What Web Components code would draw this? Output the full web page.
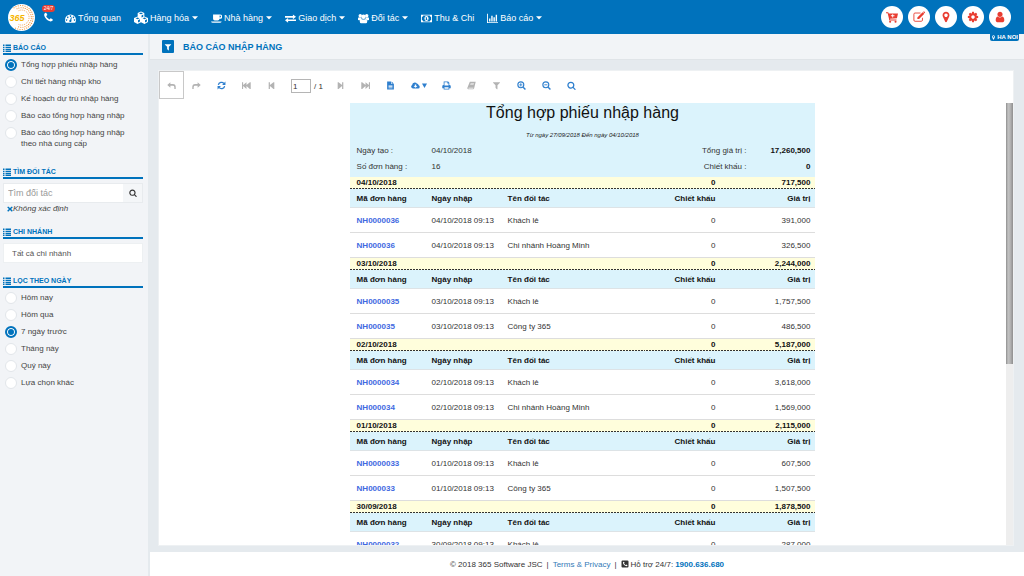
<!DOCTYPE html>
<html lang="vi">
<head>
<meta charset="utf-8">
<meta name="viewport" content="width=device-width, initial-scale=1">
<title>Báo cáo nhập hàng</title>
<style>
html, body { margin: 0; height: 100%; }
body {
  --brand: #0072bc; --panel: #f2f4f7; --line: #e5eaee; --danger: #e93d31; --text: #444;
  font-family: "Liberation Sans", Arial, sans-serif; font-size: 8px; color: var(--text);
}
</style>
</head>
<body>
<report-app></report-app>

<script>
const FA = '0 0 1792 1792';
const S = '0 0 16 16';
const ICONS = {
  list: [S, '<path d="M0 1h3v3H0zM5 1h11v3H5zM0 5.300h3v2.700H0zM5 5.300h11v2.700H5zM0 9.300h3V12H0zM5 9.300h11V12H5zM0 13.200h3V16H0zM5 13.200h11V16H5z"/>'],
  filter: [FA, '<path d="M1595 295q17 41-14 70l-493 493v742q0 42-39 59-13 5-25 5-27 0-45-19l-256-256q-19-19-19-45v-486l-493-493q-31-29-14-70 17-39 59-39h1280q42 0 59 39z"/>'],
  phone: [FA, '<path d="M1600 1240q0 27-10 70.5t-21 68.500q-21 50-122 106-94 51-186 51-27 0-53-3.500t-57.500-12.500-47-14.500-55.500-20.500-49-18q-98-35-175-83-127-79-264-216t-216-264q-48-77-83-175-3-9-18-49t-20.500-55.500-14.500-47-12.500-57.500-3.500-53q0-92 51-186 56-101 106-122 25-11 68.500-21t70.500-10q14 0 21 3 18 6 53 76 11 19 30 54t35 63.500 31 53.500q3 4 17.500 25t21.500 35.500 7 28.500q0 20-28.500 50t-62 55-62 53-28.500 46q0 9 5 22.500t8.500 20.500 14 24 11.500 19q76 137 174 235t235 174q2 1 19 11.500t24 14 20.500 8.500 22.500 5q18 0 46-28.500t53-62 55-62 50-28.500q14 0 28.500 7t35.500 21.500 25 17.500q25 15 53.500 31t63.500 35 54 30q70 35 76 53 3 7 3 21z"/>'],
  phoneBox: [S, '<path fill-rule="evenodd" d="M3 1h10q2 0 2 2v10q0 2-2 2H3q-2 0-2-2V3q0-2 2-2zM4 4.500C3.500 8 7.500 12.500 11.500 12.300Q13 11.600 12.900 10.300L10.700 9.100 9.500 10.300Q7 9 6 6.700L7.100 5.600 6 3.300Q4.500 3.200 4 4.500z"/>'],
  search: [FA, '<path d="M1216 832q0-185-131.5-316.5t-316.5-131.5-316.5 131.5-131.5 316.5 131.5 316.5 316.5 131.5 316.5-131.5 131.5-316.5zm512 832q0 52-38 90t-90 38q-54 0-90-38l-343-342q-179 124-399 124-143 0-273.5-55.5t-225-150-150-225-55.5-273.5 55.5-273.5 150-225 225-150 273.5-55.5 273.5 55.5 225 150 150 225 55.5 273.5q0 220-124 399l343 343q37 37 37 90z"/>'],
  pin: [FA, '<path d="M1152 640q0-106-75-181t-181-75-181 75-75 181 75 181 181 75 181-75 75-181zm256 0q0 109-33 179l-364 774q-16 33-47.5 52t-67.500 19-67.500-19-46.500-52l-365-774q-33-70-33-179 0-212 150-362t362-150 362 150 150 362z"/>'],
  user: [FA, '<path d="M1536 1399q0 109-62.5 187t-150.500 78h-854q-88 0-150.500-78t-62.500-187q0-85 8.500-160.500t31.500-152 58.500-131 94-89 134.500-34.500q131 128 313 128t313-128q76 0 134.500 34.500t94 89 58.500 131 31.500 152 8.500 160.500zm-256-887q0 159-112.500 271.500t-271.500 112.500-271.500-112.500-112.500-271.500 112.500-271.500 271.500-112.500 271.500 112.500 112.500 271.500z"/>'],
  cog: [FA, '<path d="M1152 896q0-106-75-181t-181-75-181 75-75 181 75 181 181 75 181-75 75-181zm512-109v222q0 12-8 23t-20 13l-185 28q-19 54-39 91 35 50 107 138 10 12 10 25t-9 23q-27 37-99 108t-94 71q-12 0-26-9l-138-108q-44 23-91 38-16 136-29 186-7 28-36 28h-222q-14 0-24.500-8.500t-11.500-21.500l-28-184q-49-16-90-37l-141 107q-10 9-25 9-14 0-25-11-126-114-165-168-7-10-7-23 0-12 8-23 15-21 51-66.500t54-70.500q-27-50-41-99l-183-27q-13-2-21-12.500t-8-23.500v-222q0-12 8-23t19-13l186-28q14-46 39-92-40-57-107-138-10-12-10-24 0-10 9-23 26-36 98.500-107.500t94.500-71.500q13 0 26 10l138 107q44-23 91-38 16-136 29-186 7-28 36-28h222q14 0 24.500 8.500t11.500 21.500l28 184q49 16 90 37l142-107q9-9 24-9 13 0 25 10 129 119 165 170 7 8 7 22 0 12-8 23-15 21-51 66.500t-54 70.500q26 50 41 98l183 28q13 2 21 12.500t8 23.500z"/>'],
  gauge: [S, '<path fill-rule="evenodd" d="M8 2a8 8 0 0 1 8 8q0 2.300-1.200 4H1.200Q0 12.300 0 10a8 8 0 0 1 8-8zM2.300 9a1.100 1.100 0 1 0 .01 0zM4 5.200a1.100 1.100 0 1 0 .01 0zM8 3.300a1.100 1.100 0 1 0 .01 0zM12.300 5.200a1.100 1.100 0 1 0 .01 0zM13.800 9a1.100 1.100 0 1 0 .01 0zM8.700 6.200L7.600 9.800Q6 10.300 6.200 12 7 13.600 8.600 13.100 10.200 12 9.200 10.300L10 6.600z"/>'],
  cubes: [S, '<path fill-rule="evenodd" d="M8 .5l3.800 1.700v4L16 8v4.700L12 14.800 8 12.800 4 14.800 0 12.700V8l4.200-1.800v-4zM8 1.700L5.700 2.800 8 3.800l2.300-1zM8.600 5v2.500l2-1V4zM4 7.300L1.800 8.300 4 9.400l2.300-1.100zM12 7.300L9.800 8.300 12 9.400l2.300-1.100zM4.600 10.500v2.700l2.200-1.200V9.400zM12.600 10.500v2.700l2.200-1.200V9.400z"/>'],
  cup: [S, '<path fill-rule="evenodd" d="M3 2h10a3.200 3.200 0 0 1 0 6.500h-.6Q12 11 10 11H5.500Q3 11 3 8.500zM12.500 3.700v3H13a1.500 1.500 0 0 0 0-3zM0 12.200h15.500Q15 14.200 13 14.200H2.500Q.5 14.200 0 12.200z"/>'],
  exchange: [S, '<path d="M0 4.300h11.500V2L16 5.500 11.500 9V6.900H0zM16 11.800H4.500v2.500L0 10.600 4.500 7.200v2.100H16z"/>'],
  group: [S, '<circle cx="3.300" cy="4" r="2.500"/><circle cx="12.700" cy="4" r="2.500"/><circle cx="8" cy="5.500" r="3.300"/><path d="M0 10V7.500Q.3 6 1.700 6q1.800.8 2.700.3Q4.500 8 5.500 8.800 3.500 9 3 10.800zM16 10V7.500Q15.700 6 14.300 6q-1.800.8-2.700.3Q11.500 8 10.500 8.800 12.500 9 13 10.800zM5 8.600Q8 10.500 11 8.600q2.300.4 2.500 4.200Q13 15 11.500 15h-7Q3 15 2.500 12.800 2.700 9 5 8.600z"/>'],
  money: [S, '<path fill-rule="evenodd" d="M0 2.500h16v11H0zM3.300 3.800Q3 5.500 1.300 5.800v4.400Q3 10.500 3.300 12.200h9.400q.3-1.700 2-2V5.800q-1.700-.3-2-2zM8 4.300a3 3.700 0 1 1-.01 0zM7.500 6.200l-1 .8v.5h.8V9.300h-.8v.8h3v-.8h-.8V6.200z"/>'],
  chart: [S, '<path d="M0 1h1.300v12.300H16v1.400H0zM3 8h2v4.400H3zM6.200 4h2v8.400h-2zM9.400 6h2v6.400h-2zM12.600 2.500h2v9.900h-2z"/>'],
  caret: ['0 0 10 6', '<path d="M0 0h10L5 5.600z"/>'],
  drop: ['0 0 10 10', '<path d="M0 1h10L5 10z"/>'],
  cart: [S, '<path fill-rule="evenodd" d="M0 1.500h3l.6 1.700H16l-1.400 6.300-9.200.9.200 1H14v1.300H4.300L4 10.400 2.200 2.900H0zM8.300 4.200v1.500H6.500v1.200h1.800v1.600h1.200V6.900h1.800V5.700H9.500V4.200z"/><circle cx="5.500" cy="14.300" r="1.400"/><circle cx="12.700" cy="14.300" r="1.400"/>'],
  edit: [S, '<path d="M12.600 9v3.200q0 1.500-1.500 1.500H2.700q-1.500 0-1.500-1.500V4.200q0-1.500 1.500-1.500H10" fill="none" stroke="currentColor" stroke-width="1.200"/><path d="M12.800 1.500l2.300 2.300-7 7H5.800V8.500zM14 .8Q14.800.200 15.500 1q.8.800.2 1.500l-.5.500-1.800-1.700z"/>'],
  times: [S, '<path d="M3.200 1L8 5.600 12.800 1 15.500 3.600 10.800 8l4.700 4.400L12.800 15 8 10.500 3.200 15 .5 12.400 5.200 8 .5 3.600z"/>'],
  undo: [S, '<path d="M6 2v3.200h4.500Q15.500 5.200 15.500 10.500V14H13v-3q0-2.400-2.500-2.400H6V12L.5 7z"/>'],
  redo: [S, '<path d="M10 2v3.200H5.500Q.5 5.200.5 10.500V14H3v-3q0-2.400 2.500-2.400H10V12l5.500-5z"/>'],
  refresh: [S, '<path d="M2.400 7A5.700 5.700 0 0 1 12.500 4.500M13.600 9A5.700 5.700 0 0 1 3.500 11.500" fill="none" stroke="currentColor" stroke-width="2.200"/><path d="M15 1v6H9zM1 15V9h6z"/>'],
  first: [S, '<path d="M0 2h2v5.300L8 2v5.300L14 2h1.500v12H14L8 8.700V14L2 8.700V14H0z"/>'],
  prev: [S, '<path d="M3 2h2.200v5.300L11.500 2H13v12h-1.500L5.200 8.700V14H3z"/>'],
  next: [S, '<path d="M13 2h-2.200v5.300L4.500 2H3v12h1.500l6.300-5.300V14H13z"/>'],
  last: [S, '<path d="M16 2h-2v5.300L8 2v5.300L2 2H.5v12H2l6-5.300V14l6-5.300V14h2z"/>'],
  file: [S, '<path fill-rule="evenodd" d="M2 1h7v4.500h5V15H2zM10 1l4 3.700h-4zM4.500 7v1.200h7V7zM4.500 9.300v1.200h7V9.300zM4.500 11.600v1.200h7v-1.200z"/>'],
  cloud: [S, '<path fill-rule="evenodd" d="M3.500 13.500A3.500 3.500 0 0 1 2 7Q2.200 2.500 6.500 2.500q3 0 4.200 2.600 2.300-.5 2.500 2A3.300 3.300 0 0 1 12.800 13.500zM6.700 6v2.800H4.500L8 12.200l3.500-3.400H9.300V6z"/>'],
  print: [S, '<path fill-rule="evenodd" d="M3 1h8l2 2v4q2.500 0 2.500 2v4H13v2H3v-2H.5V9Q.5 7 3 7zM4.400 2.400V8h7.200V4.500H9.500V2.400zM4.400 11v2.600h7.200V11z"/>'],
  book: [S, '<path fill-rule="evenodd" d="M5 1.500h10.500L12.700 13q-.4 1.500-2 1.500H2q-2-.5-1.300-2.500zM6.500 4l-.3 1h6l.3-1zM5.900 6.300l-.3 1h6l.3-1zM2.800 11.800q-1 1.200.2 1.400h8l.5-1.400z"/>'],
  zoomIn: [S, '<path d="M11 11l4 4" stroke="currentColor" stroke-width="2.600"/><circle cx="6.800" cy="6.800" r="5.300" fill="none" stroke="currentColor" stroke-width="2"/><path d="M6 4h1.600v2h2v1.600h-2v2H6v-2H4V6h2z"/>'],
  zoomOut: [S, '<path d="M11 11l4 4" stroke="currentColor" stroke-width="2.600"/><circle cx="6.800" cy="6.800" r="5.300" fill="none" stroke="currentColor" stroke-width="2"/><path d="M4 6h5.600v1.600H4z"/>'],
};

function define(name, html, setup) {
  const template = document.createElement('template');
  template.innerHTML = html;
  customElements.define(name, class extends HTMLElement {
    constructor() {
      super();
      this.attachShadow({ mode: 'open' }).append(template.content.cloneNode(true));
    }
    connectedCallback() {
      if (setup && !this.ready) { this.ready = true; setup(this, this.shadowRoot); }
    }
  });
}

define('ui-icon', `
<style>
:host { display: inline-flex; flex: none; width: var(--icon-size, 9px); height: var(--icon-size, 9px); }
svg { width: 100%; height: 100%; fill: currentColor; display: block; }
</style>
<svg aria-hidden="true"></svg>`, (host, root) => {
  const [box, markup] = ICONS[host.getAttribute('name')];
  const svg = root.querySelector('svg');
  svg.setAttribute('viewBox', box);
  svg.innerHTML = markup;
});

define('nav-item', `
<style>
:host { display: block; }
a { display: flex; align-items: center; gap: 2px; height: 14px; color: #fff; text-decoration: none; font-size: 9px; line-height: 12px; white-space: nowrap; }
ui-icon { --icon-size: 11px; }
:host([wide]) ui-icon { --icon-size: 14px; }
.caret { width: 6px; height: 4px; margin-left: 1px; }
:host(:not([menu])) .caret { display: none; }
</style>
<a href="#"><span class="icon"></span><slot></slot><ui-icon class="caret" name="caret"></ui-icon></a>`, (host, root) => {
  const icon = document.createElement('ui-icon');
  icon.setAttribute('name', host.getAttribute('icon'));
  root.querySelector('.icon').replaceWith(icon);
});

define('round-button', `
<style>
:host { display: block; }
button { display: grid; place-items: center; width: 22px; height: 22px; padding: 0; border: 0; border-radius: 50%; background: #fff; color: var(--danger); cursor: pointer; }
ui-icon { --icon-size: 12px; }
</style>
<button type="button"></button>`, (host, root) => {
  const b = root.querySelector('button');
  b.setAttribute('aria-label', host.getAttribute('label'));
  b.innerHTML = `<ui-icon name="${host.getAttribute('icon')}"></ui-icon>`;
});

define('brand-logo', `
<style>
:host { display: block; width: 27px; height: 27px; }
svg { display: block; width: 100%; height: 100%; }
text { font: italic bold 9px "Liberation Sans", Arial, sans-serif; fill: #f5b400; }
</style>
<svg viewBox="0 0 27 27" role="img" aria-label="365">
  <circle cx="13.500" cy="13.500" r="13.500" fill="#fff"/>
  <g fill="none" stroke="#f09030" stroke-linecap="round">
    <path d="M6 3.800A12 12 0 1 1 6 23.200" stroke-width="1.100" stroke-dasharray=".1 2.200"/>
    <path d="M9 4.800A9.800 9.800 0 1 1 9 22.200" stroke-width="1.100" stroke-dasharray=".1 2"/>
    <path d="M11 6.500A7.500 7.500 0 1 1 11 20.600" stroke-width=".9" stroke-dasharray=".1 1.800"/>
  </g>
  <text x="1.500" y="16.500">365</text>
</svg>`);

define('app-header', `
<style>
:host { display: flex; align-items: center; height: 34px; padding: 0 13px 0 8px; background: var(--brand); box-sizing: border-box; }
.hotline { position: relative; display: flex; margin: 0 11px 0 8px; color: #fff; --icon-size: 11px; }
.hotline span { position: absolute; left: -1px; top: -7px; width: 13px; border-radius: 4px; background: var(--danger); font-size: 5px; line-height: 7px; text-align: center; }
nav { display: flex; gap: 13px; flex: 1; padding-top: 2px; }
.actions { position: relative; display: flex; gap: 5px; }
.place { position: absolute; top: 28px; right: -8px; display: flex; align-items: center; gap: 1px; padding: 0 1px; border-radius: 0 0 2px 2px; background: var(--brand); color: #fff; font-weight: bold; font-size: 6px; line-height: 7px; white-space: nowrap; --icon-size: 5px; }
</style>
<brand-logo></brand-logo>
<a class="hotline" href="#"><ui-icon name="phone"></ui-icon><span>24/7</span></a>
<nav>
  <nav-item icon="gauge">Tổng quan</nav-item>
  <nav-item icon="cubes" wide menu>Hàng hóa</nav-item>
  <nav-item icon="cup" menu>Nhà hàng</nav-item>
  <nav-item icon="exchange" menu>Giao dịch</nav-item>
  <nav-item icon="group" menu>Đối tác</nav-item>
  <nav-item icon="money">Thu &amp; Chi</nav-item>
  <nav-item icon="chart" menu>Báo cáo</nav-item>
</nav>
<div class="actions">
  <round-button icon="cart" label="Bán hàng"></round-button>
  <round-button icon="edit" label="Ghi chép"></round-button>
  <round-button icon="pin" label="Chi nhánh"></round-button>
  <round-button icon="cog" label="Thiết lập"></round-button>
  <round-button icon="user" label="Tài khoản"></round-button>
  <span class="place"><ui-icon name="pin"></ui-icon>HA NOI</span>
</div>`);

define('side-section', `
<style>
:host { display: block; }
h2 { display: flex; align-items: center; gap: 2px; margin: 0 0 4px; border-bottom: 2px solid var(--brand); color: var(--brand); font-size: 7px; line-height: 11px; text-transform: uppercase; --icon-size: 8px; }
</style>
<h2><ui-icon name="list"></ui-icon><slot name="title"></slot></h2>
<slot></slot>`);

define('option-list', `
<style>
:host { display: flex; flex-direction: column; gap: 6px; padding: 0 12px 0 2px; }
label { display: flex; gap: 4px; line-height: 11px; }
input { appearance: none; flex: none; width: 12px; height: 12px; margin: 0 0 -1px; box-sizing: border-box; border: 1px solid #e2e6ea; border-radius: 50%; background: #fff; }
input:checked { border: 2px solid var(--brand); background: var(--brand); box-shadow: inset 0 0 0 1px #fff; }
</style>`, (host, root) => {
  host.getAttribute('options').split('|').forEach((text, i) => {
    const label = document.createElement('label');
    const input = document.createElement('input');
    const span = document.createElement('span');
    input.type = 'radio';
    input.name = 'choice';
    input.checked = i === Number(host.getAttribute('selected'));
    span.textContent = text;
    label.append(input, span);
    root.append(label);
  });
});

define('side-bar', `
<style>
:host { display: flex; flex-direction: column; padding: 8px 5px 8px 3px; background: var(--panel); border-right: 2px solid var(--line); }
.reports { margin-bottom: 17px; }
.partner, .branch { margin-bottom: 12px; }
.search { display: flex; height: 20px; box-sizing: border-box; border: 1px solid #e8ebee; }
input { flex: 1; min-width: 0; padding: 0 4px; border: 0; background: #fff; font: 9px "Liberation Sans", Arial, sans-serif; }
input::placeholder { color: #999; }
.search button { width: 19px; padding: 0; border: 0; background: #f4f6f8; color: #333; display: grid; place-items: center; --icon-size: 8px; }
.chosen { display: flex; align-items: center; padding-left: 4px; font-style: italic; line-height: 11px; }
.chosen button { display: flex; padding: 0; border: 0; background: none; color: var(--brand); --icon-size: 6px; }
select { appearance: none; display: block; width: 100%; height: 20px; padding: 0 8px; border: 1px solid #edf0f2; background: #fff; color: #555; font: 8px "Liberation Sans", Arial, sans-serif; border-radius: 0; }
</style>
<side-section class="reports"><span slot="title">Báo cáo</span>
  <option-list selected="0" options="Tổng hợp phiếu nhập hàng|Chi tiết hàng nhập kho|Kế hoạch dự trù nhập hàng|Báo cáo tổng hợp hàng nhập|Báo cáo tổng hợp hàng nhập theo nhà cung cấp"></option-list>
</side-section>
<side-section class="partner"><span slot="title">Tìm đối tác</span>
  <div class="search"><input type="text" aria-label="Tìm đối tác" placeholder="Tìm đối tác"><button type="button" aria-label="Tìm"><ui-icon name="search"></ui-icon></button></div>
  <div class="chosen"><button type="button" aria-label="Bỏ chọn"><ui-icon name="times"></ui-icon></button>Không xác định</div>
</side-section>
<side-section class="branch"><span slot="title">Chi nhánh</span>
  <select aria-label="Chi nhánh"><option>Tất cả chi nhánh</option></select>
</side-section>
<side-section><span slot="title">Lọc theo ngày</span>
  <option-list selected="2" options="Hôm nay|Hôm qua|7 ngày trước|Tháng này|Quý này|Lựa chọn khác"></option-list>
</side-section>`);

define('tool-button', `
<style>
:host { display: block; width: 25px; }
:host([menu]) { width: 31px; }
button { display: flex; align-items: center; justify-content: center; gap: 2px; width: 100%; height: 28px; padding: 0; border: 1px solid transparent; box-sizing: border-box; background: none; color: #2e7fce; --icon-size: 9px; }
:host([off]) button { color: #b3b3b3; }
:host([focused]) button { border-color: #c8c8c8; }
.caret { width: 5px; height: 5px; }
</style>
<button type="button"></button>`, (host, root) => {
  const b = root.querySelector('button');
  b.setAttribute('aria-label', host.getAttribute('label'));
  b.innerHTML = `<ui-icon name="${host.getAttribute('icon')}"></ui-icon>` +
    (host.hasAttribute('menu') ? '<ui-icon class="caret" name="drop"></ui-icon>' : '');
});

define('viewer-toolbar', `
<style>
:host { display: flex; align-items: center; height: 32px; padding: 0 0 4px; box-sizing: border-box; }
label { display: flex; align-items: center; gap: 3px; width: 37px; padding: 2px 0 0 7px; color: #333; }
input { width: 20px; height: 14px; box-sizing: border-box; padding: 0 1px; border: 1px solid #b5b5b5; color: #333; font: 8px "Liberation Sans", Arial, sans-serif; }
</style>
<tool-button icon="undo" label="Lùi" off focused></tool-button>
<tool-button icon="redo" label="Tiến" off></tool-button>
<tool-button icon="refresh" label="Tải lại"></tool-button>
<tool-button icon="first" label="Trang đầu" off></tool-button>
<tool-button icon="prev" label="Trang trước" off></tool-button>
<label><input type="text" value="1" aria-label="Trang"><span>/ 1</span></label>
<tool-button icon="next" label="Trang sau" off></tool-button>
<tool-button icon="last" label="Trang cuối" off></tool-button>
<tool-button icon="file" label="Bố cục"></tool-button>
<tool-button icon="cloud" label="Xuất" menu></tool-button>
<tool-button icon="print" label="In"></tool-button>
<tool-button icon="book" label="Mục lục" off></tool-button>
<tool-button icon="filter" label="Lọc" off></tool-button>
<tool-button icon="zoomIn" label="Phóng to"></tool-button>
<tool-button icon="zoomOut" label="Thu nhỏ"></tool-button>
<tool-button icon="search" label="Tìm kiếm"></tool-button>`);

const DAYS = [
  ['04/10/2018', '717,500', [['NH0000036', 'Khách lẻ', '391,000'], ['NH000036', 'Chi nhánh Hoàng Minh', '326,500']]],
  ['03/10/2018', '2,244,000', [['NH0000035', 'Khách lẻ', '1,757,500'], ['NH000035', 'Công ty 365', '486,500']]],
  ['02/10/2018', '5,187,000', [['NH0000034', 'Khách lẻ', '3,618,000'], ['NH000034', 'Chi nhánh Hoàng Minh', '1,569,000']]],
  ['01/10/2018', '2,115,000', [['NH0000033', 'Khách lẻ', '607,500'], ['NH000033', 'Công ty 365', '1,507,500']]],
  ['30/09/2018', '1,878,500', [['NH0000032', 'Khách lẻ', '287,000']]],
];

define('report-sheet', `
<style>
:host { display: block; }
header { background: #dbf3fc; padding-bottom: 2px; }
h3 { margin: 0; color: #111; font-size: 16px; font-weight: normal; line-height: 20px; text-align: center; }
p { margin: 7px 0 3px; color: #222; font-size: 6px; font-style: italic; line-height: 10px; text-align: center; }
dl { display: grid; grid-template-columns: 75px 1fr auto 64px; margin: 0; padding: 0 5px 0 7px; line-height: 16px; color: #333; }
dt, dd { margin: 0; }
.end { text-align: right; }
dd.end { font-weight: bold; color: #111; }
table { width: 100%; table-layout: fixed; border-collapse: separate; border-spacing: 0; }
th, td { padding: 0 6px 0 7px; text-align: left; white-space: nowrap; box-sizing: border-box; }
th:nth-last-child(-n+2), td:nth-last-child(-n+2) { text-align: right; }
th:last-child, td:last-child { padding-right: 5px; }
.day { background: repeating-linear-gradient(90deg, #333 0 2px, #fffedc 2px 3px) left bottom / 100% 1px no-repeat #fffedc; }
.day th { height: 12px; line-height: 12px; color: #111; }
.head th { height: 19px; background: #dbf3fc; color: #111; border-bottom: 1px solid #dde3e6; }
td { height: 25px; color: #333; border-bottom: 1px solid #ddd; }
a { color: #4169e1; font-weight: bold; text-decoration: none; }
.code { width: 75px; }
.date, .discount { width: 76px; }
.total { width: 94px; }
</style>
<header>
  <h3>Tổng hợp phiếu nhập hàng</h3>
  <p>Từ ngày 27/09/2018 Đến ngày 04/10/2018</p>
  <dl>
    <dt>Ngày tạo :</dt><dd>04/10/2018</dd><dt class="end">Tổng giá trị :</dt><dd class="end">17,260,500</dd>
    <dt>Số đơn hàng :</dt><dd>16</dd><dt class="end">Chiết khấu :</dt><dd class="end">0</dd>
  </dl>
</header>
<table>
  <colgroup><col class="code"><col class="date"><col><col class="discount"><col class="total"></colgroup>
</table>`, (host, root) => {
  const table = root.querySelector('table');
  for (const [day, sum, orders] of DAYS) {
    const body = document.createElement('tbody');
    body.innerHTML =
      `<tr class="day"><th colspan="3">${day}</th><th>0</th><th>${sum}</th></tr>
       <tr class="head"><th>Mã đơn hàng</th><th>Ngày nhập</th><th>Tên đối tác</th><th>Chiết khấu</th><th>Giá trị</th></tr>` +
      orders.map(([code, partner, value]) =>
        `<tr><td><a href="#">${code}</a></td><td>${day} 09:13</td><td>${partner}</td><td>0</td><td>${value}</td></tr>`).join('');
    table.append(body);
  }
});

define('report-viewer', `
<style>
:host { display: flex; flex-direction: column; min-height: 0; background: #fff; border: 1px solid #eef1f3; box-sizing: border-box; }
.view { flex: 1; min-height: 0; display: flex; }
.page { flex: 1; min-width: 0; overflow: hidden; }
report-sheet { width: 55%; margin: 0 auto; }
.bar { width: 7px; background: #eee; }
.thumb { height: 59%; background: linear-gradient(90deg, #8e8e8e, #c2c2c2 30%, #b5b5b5 60%, #8e8e8e); }
</style>
<viewer-toolbar></viewer-toolbar>
<div class="view">
  <div class="page"><report-sheet></report-sheet></div>
  <div class="bar"><div class="thumb"></div></div>
</div>`);

define('page-title', `
<style>
:host { display: flex; align-items: center; gap: 9px; height: 26px; padding: 0 12px; box-sizing: border-box; background: var(--panel); border-bottom: 1px solid #e0e4e8; }
button { display: grid; place-items: center; width: 12px; height: 13px; padding: 0; border: 0; border-radius: 1px; background: var(--brand); color: #fff; --icon-size: 8px; }
h1 { margin: 0; color: var(--brand); font-size: 9px; line-height: 12px; }
</style>
<button type="button" aria-label="Bộ lọc"><ui-icon name="filter"></ui-icon></button>
<h1><slot></slot></h1>`);

define('app-footer', `
<style>
:host { display: flex; align-items: center; justify-content: center; gap: 4px; height: 24px; background: #fff; color: #333; }
a { color: #337ab7; text-decoration: none; }
.support { display: flex; align-items: center; gap: 2px; --icon-size: 8px; }
.support a { color: var(--brand); font-weight: bold; }
</style>
<span>© 2018 365 Software JSC</span><span>|</span>
<a href="#">Terms &amp; Privacy</a><span>|</span>
<span class="support"><ui-icon name="phoneBox"></ui-icon>Hỗ trợ 24/7: <a href="tel:1900636680">1900.636.680</a></span>`);

define('report-app', `
<style>
:host { display: flex; flex-direction: column; height: 100vh; overflow: hidden; }
app-header { flex: none; }
.body { flex: 1; min-height: 0; display: grid; grid-template-columns: 150px minmax(0, 1fr); }
main { display: flex; flex-direction: column; min-height: 0; }
.canvas { flex: 1; min-height: 0; display: flex; flex-direction: column; padding: 10px 10px 6px 8px; background: var(--line); }
report-viewer { flex: 1; }
app-footer, page-title { flex: none; }
side-bar { box-sizing: border-box; }
</style>
<app-header></app-header>
<div class="body">
  <side-bar></side-bar>
  <main>
    <page-title>BÁO CÁO NHẬP HÀNG</page-title>
    <div class="canvas"><report-viewer></report-viewer></div>
    <app-footer></app-footer>
  </main>
</div>`);
</script>
</body>
</html>
